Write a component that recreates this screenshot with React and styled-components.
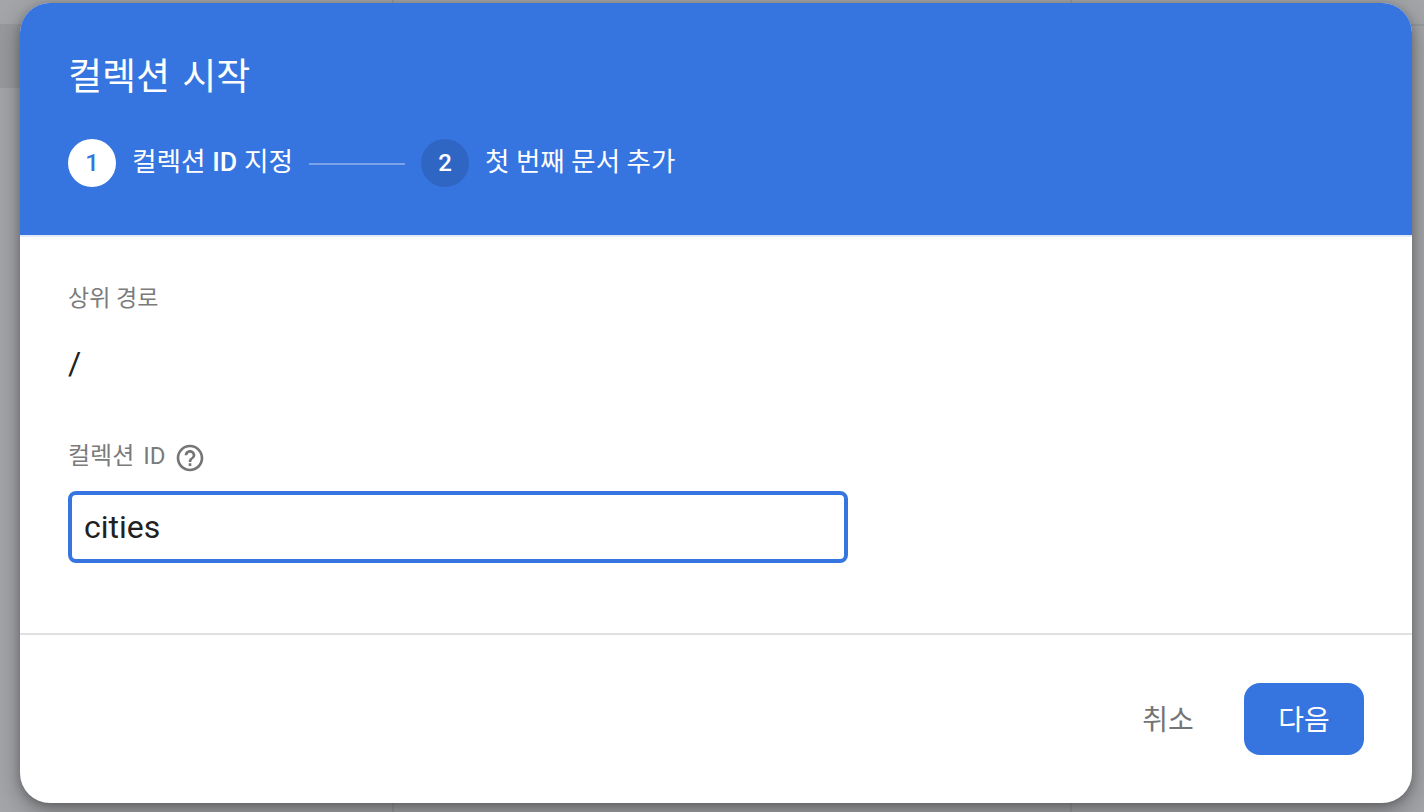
import React from 'react';
import styled, { createGlobalStyle } from 'styled-components';

const Global = createGlobalStyle`
  html, body { margin: 0; padding: 0; height: 100%; overflow: hidden; }
  body { font-family: Roboto, "Noto Sans CJK KR", sans-serif; background: #a4a5a8; }
  * { box-sizing: border-box; }
`;

const Page = styled.div`
  width: 1424px;
  height: 812px;
  position: relative;
  overflow: hidden;
  display: grid;
  grid-template-columns: 394px 678px 1fr;
  background: #a4a5a8;
`;

const Column = styled.div`
  border-right: ${p => (p.$last ? 'none' : '2px solid #98999c')};
  display: flex;
  flex-direction: column;
`;

const TopBar = styled.div`
  height: ${p => p.$h}px;
  margin-top: 24px;
  border-top: 2px solid #98999c;
  background: ${p => p.$fill || 'transparent'};
`;

const Overlay = styled.div`
  position: absolute;
  inset: 0;
  padding: 3px 12px 9px 20px;
  display: flex;
`;

const Dialog = styled.div`
  width: 1392px;
  height: 800px;
  background: #fff;
  border-radius: 30px;
  overflow: hidden;
  display: flex;
  flex-direction: column;
  box-shadow: 0 8px 24px rgba(0, 0, 0, 0.34), 0 2px 8px rgba(0, 0, 0, 0.2);
`;

const Header = styled.header`
  height: 234px;
  flex: none;
  background: #3675e0;
  padding: 51px 48px 0;
  color: #fff;
  border-bottom: 2px solid #e3eaf6;
`;

const Title = styled.h1`
  margin: 0;
  font-size: 37px;
  line-height: 48px;
  font-weight: 400;
  word-spacing: 3px;
`;

const Stepper = styled.div`
  margin-top: 37px;
  display: flex;
  align-items: center;
`;

const Badge = styled.div`
  width: 48px;
  height: 48px;
  border-radius: 50%;
  flex: none;
  display: flex;
  align-items: center;
  justify-content: center;
  font-size: 24px;
  font-weight: 500;
  background: ${p => (p.$active ? '#fff' : '#2f66c4')};
  color: ${p => (p.$active ? '#3675e0' : '#fff')};
`;

const StepLabel = styled.span`
  margin-left: 16px;
  padding-bottom: 2px;
  font-size: ${p => (p.$active ? 26.7 : 26.5)}px;
  font-weight: 400;
  line-height: 36px;
  white-space: nowrap;
`;

const StrongPart = styled.span`
  font-weight: 500;
`;

const StepLine = styled.div`
  width: 96px;
  height: 2px;
  margin: 2px 16px 0 16px;
  background: #7aa3e9;
`;

const Body = styled.main`
  flex: 1;
  padding: 46px 48px 0;
  border-bottom: 2px solid #e0e0e0;
`;

const Label = styled.div`
  display: flex;
  align-items: center;
  font-size: ${p => p.$size || 24}px;
  line-height: 32px;
  color: #7b7b7b;
  word-spacing: ${p => p.$gap || 0}px;
`;

const PathValue = styled.div`
  margin-top: 26px;
  font-size: 32px;
  line-height: 44px;
  color: #212121;
  height: 99px;
`;

const HelpIcon = styled.svg`
  width: 32px;
  height: 32px;
  margin: 2px 0 -2px 9px;
  fill: #757575;
`;

const InputBox = styled.div`
  margin-top: 19px;
  width: 780px;
  height: 72px;
  border: 4px solid #3675e0;
  border-radius: 8px;
  padding: 0 12px;
  display: flex;
  align-items: center;
  font-size: 32px;
  color: #212121;
`;

const Footer = styled.footer`
  height: 168px;
  flex: none;
  padding: 48px 48px 0 0;
  display: flex;
  justify-content: flex-end;
  align-items: flex-start;
`;

const Button = styled.div`
  height: 72px;
  min-width: ${p => (p.$primary ? '120px' : '96px')};
  margin-left: ${p => (p.$primary ? '28px' : '0')};
  padding-bottom: 3px;
  border-radius: 16px;
  display: flex;
  align-items: center;
  justify-content: center;
  font-size: 28px;
  font-weight: 400;
  background: ${p => (p.$primary ? '#3675e0' : 'transparent')};
  color: ${p => (p.$primary ? '#fff' : '#757575')};
`;

export default function App() {
  return (
    <>
      <Global />
      <Page>
        <Column><TopBar $h={64} $fill="#98999c" /></Column>
        <Column />
        <Column $last><TopBar $h={1} /></Column>
        <Overlay>
          <Dialog>
            <Header>
              <Title>컬렉션 시작</Title>
              <Stepper>
                <Badge $active>1</Badge>
                <StepLabel $active>컬렉션 <StrongPart>ID</StrongPart> 지정</StepLabel>
                <StepLine />
                <Badge>2</Badge>
                <StepLabel>첫 번째 문서 추가</StepLabel>
              </Stepper>
            </Header>
            <Body>
              <Label $size={23}>상위 경로</Label>
              <PathValue>/</PathValue>
              <Label $size={24} $gap={3}>
                컬렉션 ID
                <HelpIcon viewBox="0 0 24 24">
                  <path d="M11 18h2v-2h-2v2zm1-16C6.48 2 2 6.48 2 12s4.48 10 10 10 10-4.48 10-10S17.52 2 12 2zm0 18c-4.41 0-8-3.59-8-8s3.59-8 8-8 8 3.59 8 8-3.59 8-8 8zm0-14c-2.21 0-4 1.79-4 4h2c0-1.1.9-2 2-2s2 .9 2 2c0 2-3 1.75-3 5h2c0-2.25 3-2.5 3-5 0-2.21-1.79-4-4-4z" />
                </HelpIcon>
              </Label>
              <InputBox>cities</InputBox>
            </Body>
            <Footer>
              <Button>취소</Button>
              <Button $primary>다음</Button>
            </Footer>
          </Dialog>
        </Overlay>
      </Page>
    </>
  );
}
